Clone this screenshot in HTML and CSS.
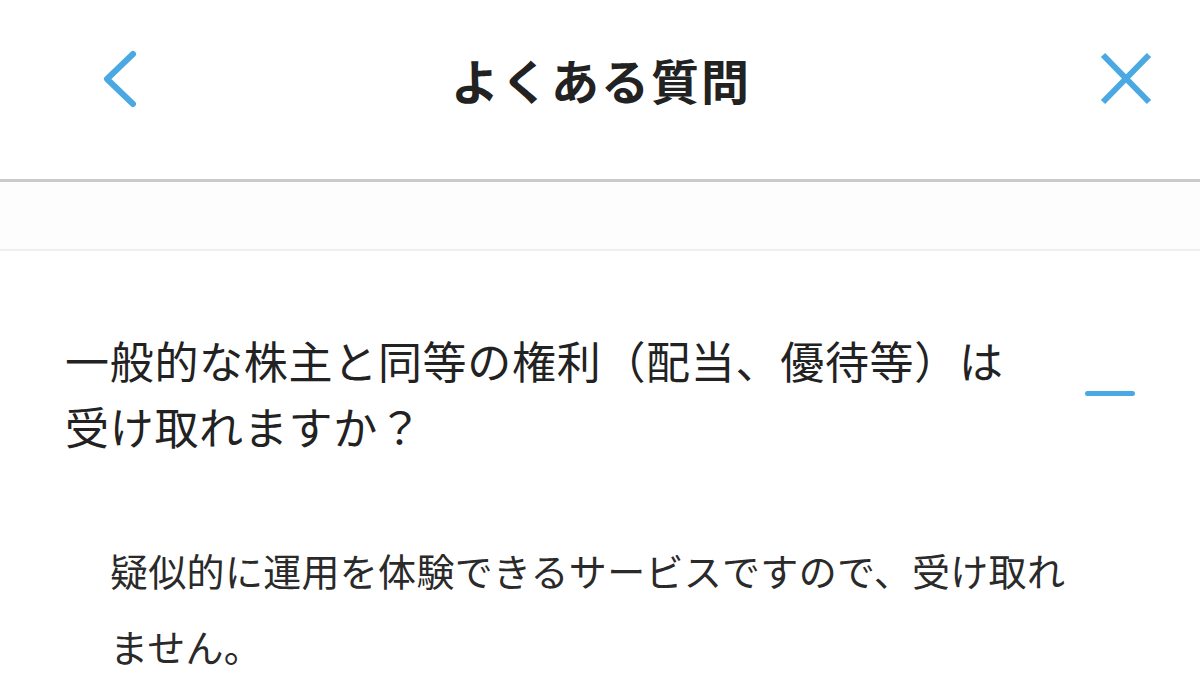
FILE: index.html
```html
<!DOCTYPE html>
<html lang="ja">
<head>
<meta charset="utf-8">
<title>よくある質問</title>
<link rel="stylesheet" href="styles.css">
</head>
<body>
<header class="header">
  <div class="header-left">
    <svg class="icon-back" width="40" height="60" viewBox="0 0 40 60" aria-label="戻る">
      <path d="M33 5 L7 30 L33 55" fill="none" stroke="#4aa9e3" stroke-width="6" stroke-linecap="round" stroke-linejoin="round"/>
    </svg>
  </div>
  <h1 class="title">よくある質問</h1>
  <div class="header-right">
    <svg class="icon-close" width="60" height="60" viewBox="0 0 60 60" aria-label="閉じる">
      <path d="M7 6 L53 53 M53 6 L7 53" fill="none" stroke="#4aa9e3" stroke-width="6" stroke-linecap="butt"/>
    </svg>
  </div>
</header>
<div class="band"></div>
<section class="faq">
  <div class="question">
    <p class="question-text">一般的な株主と同等の権利（配当、優待等）は受け取れますか？</p>
    <span class="minus"></span>
  </div>
  <p class="answer">疑似的に運用を体験できるサービスですので、受け取れません。</p>
</section>
</body>
</html>
```

FILE: styles.css
```css
* {
  box-sizing: border-box;
}

html, body {
  margin: 0;
  padding: 0;
  background: #ffffff;
}

body {
  font-family: "Noto Sans CJK JP", "Noto Sans", sans-serif;
  color: #222222;
}

.header {
  height: 182px;
  padding: 0 44px 22px 44px;
  display: grid;
  grid-template-columns: 1fr auto 1fr;
  align-items: center;
  border-bottom: 3px solid #cacaca;
}

.header-left {
  display: flex;
  padding-left: 56px;
}

.header-right {
  display: flex;
  justify-content: flex-end;
}

.icon-back,
.icon-close {
  display: block;
}

.title {
  margin: 0;
  font-size: 48px;
  font-weight: 700;
  letter-spacing: 2px;
  line-height: 60px;
  color: #222222;
  padding-left: 2px;
}

.band {
  height: 69px;
  background: #fdfdfd;
  border-bottom: 2px solid #efefef;
}

.faq {
  padding-top: 76px;
}

.question {
  display: flex;
  align-items: center;
  gap: 60px;
  padding: 0 65px;
}

.question-text {
  flex: 1;
  margin: 0;
  font-size: 44px;
  letter-spacing: 0.7px;
  line-height: 66px;
  color: #222222;
}

.minus {
  flex: none;
  width: 50px;
  height: 5px;
  border-radius: 2.5px;
  background: #4aa9e3;
}

.answer {
  margin: 73px 0 0 0;
  padding: 0 110px;
  font-size: 38px;
  letter-spacing: 0.3px;
  line-height: 76px;
  color: #2a2a2a;
}
```
